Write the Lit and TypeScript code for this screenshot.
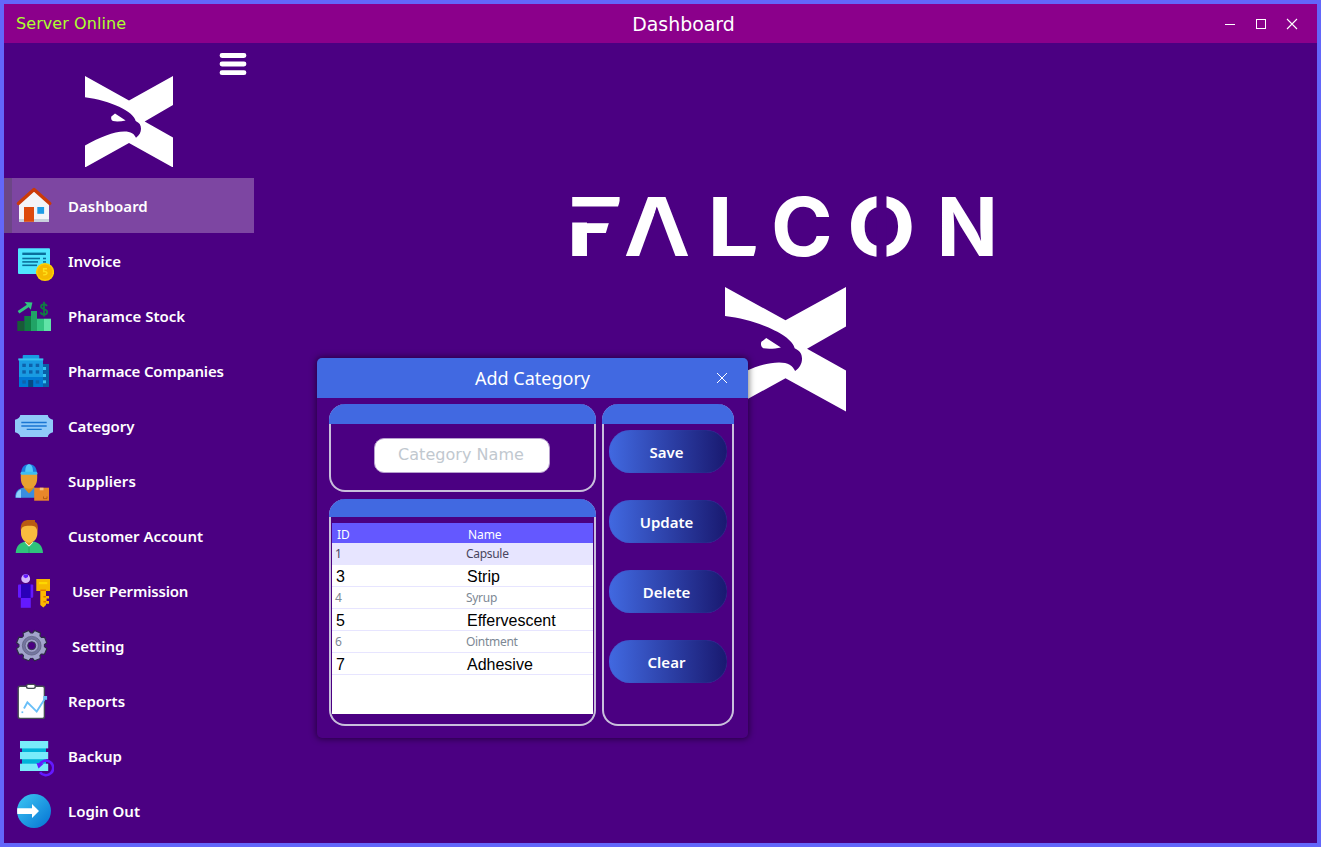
import { LitElement, html, svg, css } from "lit";
import { customElement } from "lit/decorators.js";

const gearTeeth = Array.from({ length: 8 }, (_, i) => i * 45 + 22.5);

const icons: Record<string, unknown> = {
  home: svg`
    <path d="M19 25 L34 11 L49 25 V43.8 H19Z" fill="#f4f4f8"/>
    <rect x="19" y="41" width="30" height="2.8" fill="#c8d2dc"/>
    <path d="M18.4 25.4 L34 11.4 L49.8 25.4" fill="none" stroke="#cc3a08" stroke-width="3.4" stroke-linejoin="round" stroke-linecap="round"/>
    <rect x="24" y="29" width="10" height="14.8" fill="#dd4a0d"/>
    <rect x="37.3" y="29" width="6.8" height="6.8" fill="#1f9be6"/>`,
  invoice: svg`
    <rect x="18" y="15.2" width="32" height="25.8" rx="1" fill="#50e6ff"/>
    <g fill="#0a6f9c"><rect x="22.3" y="19.6" width="23.6" height="2.4"/>
    <rect x="22.3" y="24.7" width="17.7" height="1.6"/><rect x="43" y="24.7" width="3" height="1.6"/>
    <rect x="22.3" y="28.1" width="15.7" height="1.6"/><rect x="43" y="28.1" width="3" height="1.6"/>
    <rect x="22.3" y="31.5" width="14.7" height="1.6"/></g>
    <circle cx="45" cy="39" r="9.1" fill="#fdcf00"/><circle cx="45" cy="39" r="7.6" fill="#f5b800"/>
    <path d="M47 35.8 H43.6 V38.6 C48.2 38 48 42.4 43.2 41.8" fill="none" stroke="#fee119" stroke-width="1.4"/>`,
  stock: svg`
    <rect x="17.3" y="33" width="7" height="10" fill="#185c37"/><rect x="24.3" y="28" width="6.7" height="15" fill="#107c42"/>
    <rect x="31" y="23" width="6" height="20" fill="#21a366"/><rect x="37" y="30.7" width="7" height="12.3" fill="#33c481"/>
    <rect x="44" y="30.7" width="7" height="12.3" fill="#61e3a7"/>
    <path d="M18.5 24.2 L28.5 17.5" stroke="#33c481" stroke-width="3"/><path d="M24.6 14 L32.4 14.6 L30.8 21.8Z" fill="#33c481"/>
    <path d="M47 18.2 C45.6 15.4 40.8 15.7 41 18.7 C41.2 21.8 47.2 20.4 47.2 24 C47.2 27.4 41.4 27.4 40.6 24.2 M44 13.8 V28.4" fill="none" stroke="#107c42" stroke-width="1.8"/>`,
  company: svg`
    <rect x="42.5" y="21" width="6.5" height="23" fill="#0a5fa8"/>
    <g fill="#35c1f1"><rect x="43" y="24" width="3" height="3"/><rect x="43" y="31" width="3" height="3"/><rect x="43" y="37.3" width="3" height="3"/></g>
    <rect x="22.7" y="12" width="16.6" height="6" rx="1" fill="#199be2"/>
    <rect x="19" y="16" width="24" height="18" fill="#199be2"/><rect x="18.3" y="15.4" width="25" height="2" fill="#35c1f1"/>
    <rect x="19" y="34" width="24" height="10" fill="#0078d4"/>
    <g fill="#0d62ab"><rect x="22.3" y="20.7" width="3.5" height="3.3"/><rect x="29" y="20.7" width="3.5" height="3.3"/><rect x="35.7" y="20.7" width="3.5" height="3.3"/>
    <rect x="22.3" y="27.3" width="3.5" height="3.3"/><rect x="29" y="27.3" width="3.5" height="3.3"/><rect x="35.7" y="27.3" width="3.5" height="3.3"/>
    <rect x="22.3" y="37.3" width="3.5" height="3.3"/><rect x="35.7" y="37.3" width="3.5" height="3.3"/></g>
    <rect x="28.2" y="37" width="5" height="7" fill="#064a83"/>`,
  category: svg`
    <path d="M20.3 17 H47.8 Q48.3 20.8 53 21.8 V34.2 Q48.3 35.2 47.8 39 H20.3 Q19.7 35.2 15 34.2 V21.8 Q19.7 20.8 20.3 17Z" fill="#90caf9"/>
    <path d="M21.3 24.5 H46.7 M21.3 28 H46.7 M26.7 31.4 H41.7" stroke="#1976d2" stroke-width="1.4"/>`,
  supplier: svg`
    <path d="M15.2 44.8 C15.2 38.5 18 35.6 24 34.5 H34 C37 35.5 38 38 38 44.8Z" fill="#3a8de0"/>
    <path d="M16 44.5 C16 40 18 37.5 21 36.5 L21 44.8Z" fill="#8fd0fa"/><path d="M23.6 34.5 L29 40.5 L34.4 34.5 L32 31 H26Z" fill="#d98c1c"/>
    <path d="M20.8 20 H37.2 V25 C37.2 32 33.4 35.8 29 35.8 C24.6 35.8 20.8 32 20.8 25Z" fill="#e8a030"/>
    <path d="M21.3 19.8 C21.3 14.4 24.2 11.3 29 11.3 C33.8 11.3 36.8 14.4 36.8 19.8Z" fill="#1c7be0"/><path d="M25.2 19 C25.2 13.8 26.8 11.3 29 11.3 C31.4 11.3 33 13.8 33 19Z" fill="#54c8fa"/>
    <rect x="20.6" y="18.8" width="16.8" height="3" rx="1.4" fill="#3cbdf3"/>
    <rect x="34.2" y="34.7" width="14.8" height="13" fill="#e8862a"/><rect x="39.8" y="34.7" width="3.7" height="2.6" fill="#f7c083"/>
    <path d="M43.5 43.5 V45.6 H47 V43.5" fill="none" stroke="#a9500c" stroke-width=".8"/>`,
  customer: svg`
    <path d="M15.7 45 C16 37 21 34 26 33.5 H33 C38 34 42.6 37 43 45Z" fill="#2fc37c"/>
    <path d="M24.6 34.3 L29 38.8 L33.3 34.3Z" fill="#fff"/><path d="M29 38.5 V45" stroke="#1f9a5e" stroke-width=".8"/>
    <path d="M25.8 31 H32.2 V34.6 L29 37.5 L25.8 34.6Z" fill="#dc9a1c"/>
    <path d="M21 20 C21 14 37.4 14 37.4 20 V25 C37.4 31 33.4 34.8 29.2 34.8 C25 34.8 21 31 21 25Z" fill="#f9bc3e"/>
    <path d="M20.8 23 C20 14 24 12 29 12 H35 V14 C38 15 38.3 19 37.3 23 C36.3 18.5 34.4 17.6 29.2 17.8 C24 17.8 21.8 18.6 20.8 23Z" fill="#b95b12"/>`,
  permission: svg`
    <circle cx="25.7" cy="15.7" r="4.4" fill="#d6b6fb"/><path d="M23.5 11.4 H28 V14 L25.7 15.2 L23.5 14Z" fill="#6419ff"/>
    <rect x="18" y="21.5" width="15.2" height="13.3" rx="1" fill="#6419ff"/><rect x="21" y="21" width="9.6" height="14" fill="#2a00b8"/>
    <rect x="20.8" y="35" width="10" height="9.8" fill="#6419ff"/>
    <rect x="36.3" y="16" width="13.7" height="12" fill="#f5b800"/><rect x="39" y="19" width="8.3" height="2.2" fill="#fdd800"/>
    <path d="M40.3 26 H46 V33 H49 V35.5 H46.6 V38 H49 V40.7 H46 V42 L43.3 44.5 L40.3 42Z" fill="#fdb900"/><path d="M40.3 26.4 H46 V28 H40.3 M43.4 33 H46 V34.6 H43.4 M43.4 38 H46 V39.6 H43.4Z" fill="#e07a00"/>`,
  gear: svg`
    <g fill="#a2a4cc" stroke="#2c2c44" stroke-width="1.2">
    ${gearTeeth.map((a) => svg`<path d="M27 18 L28.6 12.6 H34.8 L36.4 18Z" transform="rotate(${a} 31.7 27.7)"/>`)}
    </g>
    <circle cx="31.7" cy="27.7" r="12.2" fill="#a2a4cc"/>
    <circle cx="31.7" cy="27.7" r="8" fill="none" stroke="#7476a0" stroke-width="2.6"/>
    <circle cx="31.7" cy="27.7" r="9.4" fill="none" stroke="#50526f" stroke-width=".6"/>
    <circle cx="31.7" cy="27.7" r="6.6" fill="none" stroke="#50526f" stroke-width=".6"/>
    <circle cx="31.7" cy="27.7" r="4" fill="#4b0082" stroke="#383a52" stroke-width="1"/>`,
  report: svg`
    <rect x="18.2" y="13.2" width="26.2" height="32.2" rx="2" fill="#fff" stroke="#454b54" stroke-width="1.4"/>
    <rect x="26.5" y="11.4" width="8.8" height="4" rx="1.8" fill="#fff" stroke="#454b54" stroke-width="1.4"/>
    <path d="M24 35.5 L27.4 29.4 L36.7 38.6 L44.4 26.5" fill="none" stroke="#69bff8" stroke-width="1.9"/>
    <rect x="43.3" y="23" width="3.8" height="3.8" fill="#69bff8"/><rect x="21.5" y="38.4" width="1.7" height="1.7" fill="#69bff8"/>`,
  backup: svg`
    <rect x="22" y="18" width="24" height="20" fill="#00b3d9"/>
    <g fill="#79ecfa"><rect x="20" y="13" width="28.2" height="7.4"/><rect x="20" y="24" width="28.2" height="7.2"/><rect x="20" y="35.7" width="28.2" height="7.3"/></g>
    <path d="M39.6 36.2 A7.3 7.3 0 1 1 40 44.2" fill="none" stroke="#6419ff" stroke-width="2.6"/>
    <path d="M36.5 35 L44 35.5 L38.5 40.5Z" fill="#6419ff"/>`,
  logout: svg`
    <defs><linearGradient id="disc" x1="0" y1="0" x2="1" y2="1"><stop offset="0.1" stop-color="#38bff0"/><stop offset="0.9" stop-color="#0a7ad6"/></linearGradient></defs>
    <circle cx="34" cy="28" r="17" fill="url(#disc)"/>
    <path d="M17.3 25.2 H32 V21 L39 28 L32 35 V31 H17.3 Q17 28 17.3 25.2Z" fill="#fff"/>`,
};

const menu = [
  { label: "Dashboard", icon: "home", active: true },
  { label: "Invoice", icon: "invoice" },
  { label: "Pharamce Stock", icon: "stock" },
  { label: "Pharmace Companies", icon: "company", tight: true },
  { label: "Category", icon: "category" },
  { label: "Suppliers", icon: "supplier" },
  { label: "Customer Account", icon: "customer" },
  { label: "User Permission", icon: "permission", indent: true, tight: true },
  { label: "Setting", icon: "gear", indent: true },
  { label: "Reports", icon: "report" },
  { label: "Backup", icon: "backup" },
  { label: "Login Out", icon: "logout" },
];

const rows = [
  [1, "Capsule"], [3, "Strip"], [4, "Syrup"], [5, "Effervescent"], [6, "Ointment"], [7, "Adhesive"],
];

// Wordmark letters: glyph, left origin, horizontal stretch.
const letters: [string, number, number][] = [
  ["F", 565.8, 1.22], ["A", 623.8, 1.1], ["L", 707.3, 1.13], ["C", 771, 1.03], ["O", 846.9, 1.1], ["N", 936.8, 0.99],
];

@customElement("falcon-mark")
class FalconMark extends LitElement {
  static styles = css`
    :host { display: block; }
    svg { display: block; width: 100%; height: 100%; }
  `;
  render() {
    return html`<svg viewBox="0 0 264 274" preserveAspectRatio="none" fill="#fff">
      <path d="M0 0 L132 73 L264 0 V87 L179 136 L264 184 V274 L132 201 L0 274 V208 C45 183 85 166 118 166 C138 166 148 173 153 185 C163 178 168 168 168 158 C168 147 163 140 152 135 C148 108 75 73 0 64Z"/>
      <path d="M90 112 L122 133 C110 136 95 137 84 135 C77 132 77 120 82 119Z"/>
    </svg>`;
  }
}

@customElement("category-dialog")
class CategoryDialog extends LitElement {
  static styles = css`
    :host { display: flex; flex-direction: column; width: 431px; height: 380px; background: #4b0082; border-radius: 5px; overflow: hidden; box-shadow: 0 0 6px 1px rgba(0,0,0,.5); color: #fff; font-family: "Noto Sans", sans-serif; }
    .title { height: 40px; flex: none; background: #4169e1; display: grid; grid-template-columns: 1fr 12px; align-items: center; padding: 0 20px 0 0; font-size: 18px; }
    .title span { text-align: center; padding-left: 32px; }
    .title svg { width: 12px; height: 12px; }
    .body { flex: 1; display: grid; grid-template-columns: 267px 132px; column-gap: 6px; padding: 6px 14px 12px 12px; }
    .left { display: grid; grid-template-rows: 88px 227px; row-gap: 7px; }
    .panel { box-sizing: border-box; display: flex; flex-direction: column; border-radius: 16px; border: 2px solid #c9bfdc; border-top: none; }
    .cap { height: 20px; flex: none; margin: 0 -2px; background: #4169e1; border-radius: 16px 16px 0 0; }
    .cap.low { height: 18px; }
    .field { box-sizing: border-box; width: 176px; height: 35px; margin: 14px 0 0 43px; background: #fff; border: 1px solid #b79fce; border-radius: 10px; color: #c1c8cf; font: 16px/31px "DejaVu Sans", sans-serif; letter-spacing: 0.05px; text-align: center; padding-right: 2px; }
    .table { margin: 6px 0 0 1px; width: 261px; height: 191px; background: #fff; }
    .row { box-sizing: border-box; height: 22px; display: grid; grid-template-columns: 131px 1fr; align-items: center; padding-left: 3px; border-bottom: 1px solid #e7e5ff; font-size: 12px; letter-spacing: -0.3px; line-height: 20px; color: #7d8894; }
    .row.head { height: 20px; background: #6458ff; border: none; color: #fff; padding: 2px 0 0 5px; letter-spacing: -0.1px; }
    .row.big { font: 16px/20px "Liberation Sans", sans-serif; letter-spacing: 0; color: #000; padding: 2px 0 0 4px; }
    .row.sel { background: #e7e5ff; color: #4a4560; }
    .actions { display: flex; flex-direction: column; gap: 28px; padding: 6px 5px; }
    .btn { height: 43px; margin-bottom: -1px; border: none; padding: 1.5px 3px 0 0; border-radius: 21px; background: linear-gradient(90deg, #4169e1, #191970); color: #fff; font: 600 15px "Noto Sans", sans-serif; box-shadow: inset 0 0 1px #4b4bb8; }
  `;
  render() {
    return html`
      <div class="title"><span>Add Category</span>
        <svg viewBox="0 0 12 12"><path d="M1 1 L11 11 M11 1 L1 11" stroke="#fff" stroke-width="1"/></svg></div>
      <div class="body">
        <div class="left">
          <div class="panel"><div class="cap"></div><div class="field">Category Name</div></div>
          <div class="panel"><div class="cap low"></div>
            <div class="table">
              <div class="row head"><span>ID</span><span>Name</span></div>
              ${rows.map(([id, name], i) => html`<div class="row ${i % 2 ? "big" : ""} ${i === 0 ? "sel" : ""}"><span>${id}</span><span>${name}</span></div>`)}
            </div>
          </div>
        </div>
        <div class="panel"><div class="cap"></div>
          <div class="actions">${["Save", "Update", "Delete", "Clear"].map((t) => html`<button class="btn">${t}</button>`)}</div>
        </div>
      </div>`;
  }
}

@customElement("app-root")
class AppRoot extends LitElement {
  static styles = css`
    :host { display: block; }
    .frame { box-sizing: border-box; width: 1321px; height: 847px; border: 4px solid #6366fa; background: #4b0082; display: grid; grid-template: 39px 1fr / 100%; position: relative; overflow: hidden; color: #fff; }
    .bar { background: #8b008b; display: grid; grid-template-columns: 1fr auto 1fr; align-items: center; font-family: "DejaVu Sans", sans-serif; padding: 0 19px 0 12px; }
    .status { color: #adff2f; font-size: 16px; letter-spacing: 0.08px; }
    .heading { font-size: 18.9px; padding-left: 53px; }
    .win { display: flex; justify-content: flex-end; gap: 19px; }
    .win svg { width: 12px; height: 12px; }
    .content { display: grid; grid-template-columns: 250px 1fr; }
    .brand { height: 135px; box-sizing: border-box; display: flex; padding: 32.5px 0 0 81px; }
    .brand falcon-mark { width: 88px; height: 91.5px; }
    .burger { width: 28px; height: 24px; margin: -23.7px 0 0 46px; }
    .item { height: 55px; display: flex; align-items: center; gap: 14px; padding-left: 10px; font: 600 15px "Noto Sans", sans-serif; }
    .item svg { width: 40px; height: 55px; flex: none; }
    .item.active { background: #7d46a2; box-shadow: inset 8px 0 0 #6c4686; }
    .item .indent { padding-left: 4px; }
    .tight { letter-spacing: -0.17px; }
    .hero { display: flex; flex-direction: column; align-items: center; padding-top: 128px; }
    .word { width: 431px; height: 115px; display: block; margin-bottom: 1px; overflow: visible; }
    .word text { font: 700 81px "Inter", sans-serif; fill: #fff; }
    .hero falcon-mark { width: 121px; height: 124.5px; }
    category-dialog { position: absolute; left: 313px; top: 354px; }
  `;
  render() {
    return html`
      <div class="frame">
        <header class="bar">
          <span class="status">Server Online</span>
          <span class="heading">Dashboard</span>
          <div class="win">
            <svg viewBox="0 0 12 12"><path d="M1 6.5 H11" stroke="#fff"/></svg>
            <svg viewBox="0 0 12 12"><rect x="1.5" y="1.5" width="9" height="9" fill="none" stroke="#fff"/></svg>
            <svg viewBox="0 0 12 12"><path d="M1 1 L11 11 M11 1 L1 11" stroke="#fff" stroke-width="1.1"/></svg>
          </div>
        </header>
        <div class="content">
          <nav>
            <div class="brand"><falcon-mark></falcon-mark>
              <svg class="burger" viewBox="0 0 28 24"><path d="M3 3.5 H25 M3 12 H25 M3 20.7 H25" stroke="#fff" stroke-width="4.8" stroke-linecap="round"/></svg>
            </div>
            ${menu.map((m) => html`<div class="item ${m.active ? "active" : ""}">
              <svg viewBox="14 0 40 55">${icons[m.icon]}</svg><span class="${m.indent ? "indent" : ""} ${m.tight ? "tight" : ""}">${m.label}</span></div>`)}
          </nav>
          <main class="hero">
            <svg class="word" viewBox="570 171 431 115">
              ${letters.map(([ch, x, s]) => svg`<text transform="translate(${x} 256) scale(${s} 1)">${ch}</text>`)}
              <g fill="#4b0082">
                <path d="M568 206.6 H618 L622 195 H628 V222.6 H568Z"/>
                <path d="M609.8 220 H626 V234 H605.5Z"/>
                <path d="M657 207 L675.8 257 H638.8Z"/>
                <path d="M757.5 243 L753.3 257.5 H760 V243Z"/>
                <rect x="876.5" y="193" width="10" height="68"/>
              </g>
            </svg>
            <falcon-mark></falcon-mark>
          </main>
        </div>
        <category-dialog></category-dialog>
      </div>`;
  }
}
